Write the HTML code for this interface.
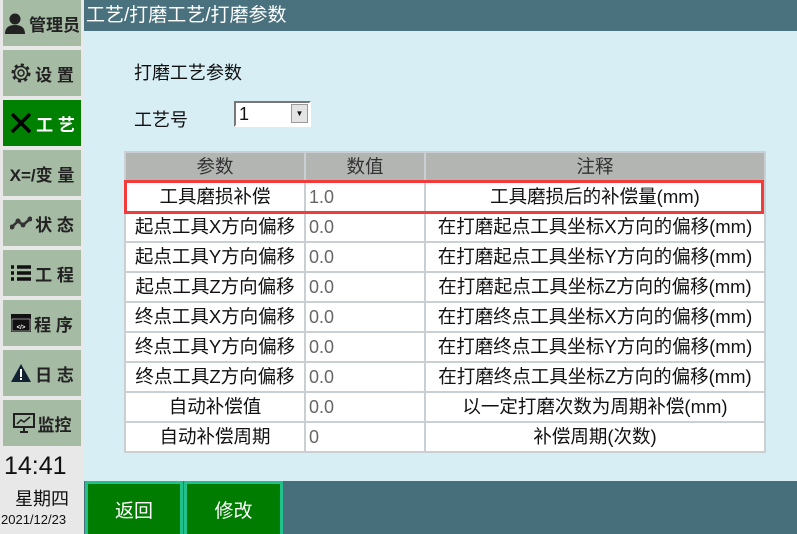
<!DOCTYPE html>
<html><head><meta charset="utf-8"><style>
*{margin:0;padding:0;box-sizing:border-box}
body{width:797px;height:534px;overflow:hidden;background:#d8eef5;font-family:"Liberation Sans","Noto Sans CJK SC",sans-serif;position:relative;color:#111}
.side{position:absolute;left:0;top:0;width:84px;height:534px;background:#e8e8e8}
.btn{position:absolute;left:3px;width:78px;height:46px;background:#a5bba3;display:flex;align-items:center;justify-content:center;font-size:17px;font-weight:bold;color:#222;gap:3px}
.btn.act{background:#008000;color:#fff}
.hdr{position:absolute;left:84px;top:0;width:713px;height:31px;background:#4a717e;color:#fff;font-size:19px;line-height:31px;padding-left:2px}
.t{position:absolute;font-size:18px}
table{position:absolute;left:124px;top:151px;border-collapse:collapse;font-size:18.5px;table-layout:fixed}
td{border:2px solid #c9cfd3;background:#fff;height:30px;text-align:center;padding:0;white-space:nowrap;line-height:26px}
tr.h td{background:#b3b5b3;color:#333;height:30px}
td.v{text-align:left;padding-left:3px;color:#666;font-size:18px}
.red{position:absolute;left:124px;top:180px;width:640px;height:34px;border:3px solid #f23b3b}
.bot{position:absolute;left:84px;top:481px;width:713px;height:53px;background:#476e7b}
.bb{position:absolute;top:481px;height:53px;background:#007c00;border:3px solid #22c08a;border-bottom:none;color:#fff;font-size:19px;display:flex;align-items:center;justify-content:center}
</style></head><body>
<div class="side">
<div class="btn" style="top:0"><svg width="22" height="22" viewBox="0 0 22 22"><circle cx="11" cy="7" r="5.5" fill="#222"/><path d="M1 22 Q1 13 11 13 Q21 13 21 22Z" fill="#222"/></svg>管理员</div>
<div class="btn" style="top:50px"><svg width="22" height="22" viewBox="0 0 22 22"><circle cx="11" cy="11" r="8" fill="none" stroke="#222" stroke-width="3" stroke-dasharray="3 3.2"/><circle cx="11" cy="11" r="6.5" fill="none" stroke="#222" stroke-width="1.5"/><circle cx="11" cy="11" r="3" fill="none" stroke="#222" stroke-width="1.5"/></svg>设 置</div>
<div class="btn act" style="top:100px"><svg width="24" height="24" viewBox="0 0 24 24"><path d="M3 3 L21 21 M21 3 L3 21" stroke="#000" stroke-width="3.5"/></svg>工 艺</div>
<div class="btn" style="top:150px">X=/变 量</div>
<div class="btn" style="top:200px"><svg width="22" height="14" viewBox="0 0 22 14"><path d="M2 11 L8 5 L13 9 L20 3" stroke="#333" stroke-width="2.5" fill="none"/><circle cx="2" cy="11" r="2.5" fill="#333"/><circle cx="8" cy="5" r="2.5" fill="#333"/><circle cx="13" cy="9" r="2.5" fill="#333"/><circle cx="20" cy="3" r="2.5" fill="#333"/></svg>状 态</div>
<div class="btn" style="top:250px"><svg width="22" height="18" viewBox="0 0 22 18"><path d="M1 3h3M7 3h14M1 9h3M7 9h14M1 15h3M7 15h14" stroke="#111" stroke-width="3.5"/></svg>工 程</div>
<div class="btn" style="top:300px"><svg width="20" height="18" viewBox="0 0 20 18"><rect x="0" y="0" width="20" height="18" fill="#111"/><rect x="1" y="5" width="18" height="12" fill="#111" stroke="#ddd" stroke-width=".6"/><text x="10" y="15" font-size="6" fill="#fff" text-anchor="middle">&lt;/&gt;</text></svg>程 序</div>
<div class="btn" style="top:350px"><svg width="22" height="20" viewBox="0 0 22 20"><path d="M11 1 L21 19 L1 19Z" fill="#123"/><rect x="10" y="6" width="2" height="8" fill="#fff"/><rect x="10" y="15" width="2" height="2" fill="#fff"/></svg>日 志</div>
<div class="btn" style="top:400px"><svg width="22" height="20" viewBox="0 0 22 20"><rect x="1" y="1" width="20" height="13" fill="none" stroke="#222" stroke-width="2"/><path d="M4 11 L8 7 L11 9 L17 4" stroke="#222" stroke-width="1.5" fill="none"/><path d="M7 19h8M11 14v5" stroke="#222" stroke-width="2"/></svg>监控</div>
<div style="position:absolute;left:4px;top:452px;font-size:25px">14:41</div>
<div style="position:absolute;left:15px;top:485px;font-size:18px">星期四</div>
<div style="position:absolute;left:1px;top:512px;font-size:13px">2021/12/23</div>
</div>
<div class="hdr">工艺/打磨工艺/打磨参数</div>
<div class="t" style="left:134px;top:59px">打磨工艺参数</div>
<div class="t" style="left:134px;top:106px">工艺号</div>
<div style="position:absolute;left:234px;top:101px;width:77px;height:26px;background:#fff;border:2px solid;border-color:#777 #fff #fff #777;font-size:18px;padding-left:3px;line-height:22px">1<div style="position:absolute;right:1px;top:1px;width:17px;height:19px;background:#e4e4e4;border:1px solid #999;font-size:8px;text-align:center;line-height:18px">▼</div></div>
<table>
<colgroup><col style="width:180px"><col style="width:120px"><col style="width:340px"></colgroup>
<tr class="h"><td>参数</td><td>数值</td><td>注释</td></tr>
<tr><td>工具磨损补偿</td><td class="v">1.0</td><td>工具磨损后的补偿量(mm)</td></tr>
<tr><td>起点工具X方向偏移</td><td class="v">0.0</td><td>在打磨起点工具坐标X方向的偏移(mm)</td></tr>
<tr><td>起点工具Y方向偏移</td><td class="v">0.0</td><td>在打磨起点工具坐标Y方向的偏移(mm)</td></tr>
<tr><td>起点工具Z方向偏移</td><td class="v">0.0</td><td>在打磨起点工具坐标Z方向的偏移(mm)</td></tr>
<tr><td>终点工具X方向偏移</td><td class="v">0.0</td><td>在打磨终点工具坐标X方向的偏移(mm)</td></tr>
<tr><td>终点工具Y方向偏移</td><td class="v">0.0</td><td>在打磨终点工具坐标Y方向的偏移(mm)</td></tr>
<tr><td>终点工具Z方向偏移</td><td class="v">0.0</td><td>在打磨终点工具坐标Z方向的偏移(mm)</td></tr>
<tr><td>自动补偿值</td><td class="v">0.0</td><td>以一定打磨次数为周期补偿(mm)</td></tr>
<tr><td>自动补偿周期</td><td class="v">0</td><td>补偿周期(次数)</td></tr>
</table>
<div class="red"></div>
<div class="bot"></div>
<div class="bb" style="left:85px;width:98px">返回</div>
<div class="bb" style="left:184px;width:99px">修改</div>
</body></html>
